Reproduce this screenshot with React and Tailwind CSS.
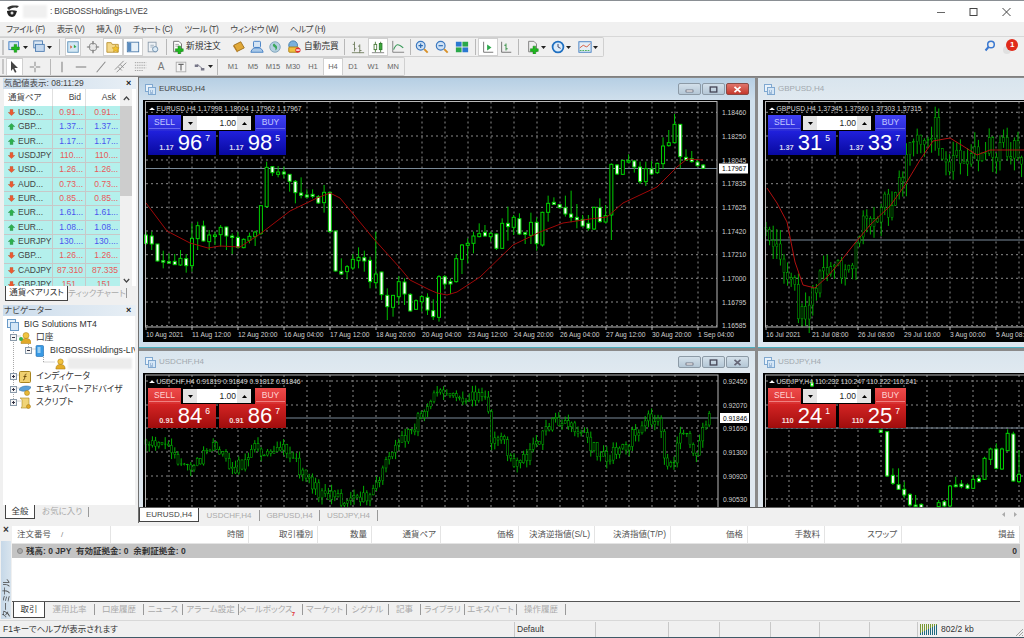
const rnd = (i) => {
  const s = Math.sin(i * 12.9898) * 43758.5453
  return s - Math.floor(s)
}

const interp = (path, x) => {
  for (let i = 1; i < path.length; i++) {
    if (x <= path[i][0]) {
      const [x0, y0] = path[i - 1]
      const [x1, y1] = path[i]
      return y0 + ((y1 - y0) * (x - x0)) / (x1 - x0)
    }
  }
  return path[path.length - 1][1]
}

// bars made up from a rough price path, for the dense charts
const makeBars = (path, x0, x1, step, amp, seed) => {
  const out = []
  let prev = interp(path, x0)
  let n = seed
  for (let x = x0; x < x1; x += step) {
    const c = interp(path, x) + (rnd(n++) - 0.5) * amp
    const hi = Math.min(prev, c) - rnd(n++) * amp * 0.5
    const lo = Math.max(prev, c) + rnd(n++) * amp * 0.5
    out.push({ x, o: prev, c, hi, lo })
    prev = c
  }
  return out
}

// [bodyTop, bodyBottom, wickTop, wickBottom, white?] read off the picture at 3x
const EUR_CANDLES = [
  [405,430,395,435,1],[408,432,395,450,1],[432,483,432,485,1],[482,485,452,505,1],[485,488,460,490,1],[484,494,462,495,1],[475,495,450,498,0],[476,497,462,518,1],
  [415,497,370,515,0],[377,416,365,450,0],[378,423,362,425,1],[405,425,390,450,0],[405,408,395,435,0],[382,404,375,440,0],[381,408,380,450,1],[408,412,400,462,1],
  [412,442,395,445,1],[418,443,415,445,0],[409,421,398,430,0],[396,410,392,438,0],[317,400,315,405,0],[202,320,185,322,0],[200,218,198,228,1],[216,223,198,232,0],
  [216,222,200,235,1],[223,244,222,275,1],[244,278,240,310,1],[279,286,232,295,1],[285,291,268,295,1],[283,289,268,295,1],[290,309,285,312,1],[277,308,255,338,0],
  [277,395,275,397,1],[393,513,392,515,1],[514,522,475,525,1],[500,515,495,538,0],[478,504,462,510,0],[472,482,442,505,0],[473,483,452,515,1],[481,545,470,565,1],
  [522,548,395,565,0],[516,584,515,600,1],[586,620,565,660,1],[586,622,585,650,0],[545,590,528,615,0],[546,582,535,615,1],[583,633,580,635,1],[602,628,598,630,0],
  [590,605,585,635,0],[592,630,580,645,1],[632,650,598,660,1],[530,652,525,665,0],[530,552,525,568,1],[544,552,535,582,1],[476,545,462,548,0],[435,478,432,522,0],
  [430,436,415,490,0],[408,430,395,460,0],[401,410,370,412,0],[397,408,375,410,1],[400,410,395,425,0],[402,445,400,450,1],[370,445,355,447,0],[370,380,320,422,1],
  [352,382,345,405,0],[356,402,340,405,1],[398,403,395,432,1],[367,406,338,432,0],[367,431,352,452,1],[337,435,335,440,0],[310,337,287,365,0],[307,313,292,315,1],
  [314,323,312,325,1],[323,342,287,350,1],[342,352,272,367,1],[352,360,312,385,1],[358,378,345,380,1],[370,385,345,392,1],[322,387,320,390,0],[323,365,295,368,1],
  [347,366,315,370,0],[193,345,190,420,0],[195,222,192,225,1],[181,223,180,225,0],[182,186,163,190,0],[183,201,180,218,1],[201,245,185,252,1],[206,245,185,258,0],
  [207,222,183,225,1],[190,218,188,222,0],[138,191,112,207,0],[128,137,90,140,0],[73,128,42,130,0],[73,170,72,205,1],[172,180,148,182,1],[176,185,153,188,1],
  [186,197,180,200,1],[195,205,192,207,1],
]

const EUR_MA = [
  [146,203],[167,231],[190,243],[208,248],[220,246],[240,247],[260,234],[290,211],[317,198],[330,193],[340,198],[373,238],[400,268],[410,280],[430,290],
  [437,293],[447,295],[457,292],[480,277],[513,245],[540,232],[563,223],[590,219],[607,217],[623,203],[657,187],[677,167],[687,159],[703,160],
]

// zx (2.64x), body top, bottom, wick top, bottom, white?
const JPY_CANDLES = [
  [1190,240,247,240,247,1],[1207,245,378,245,380,1],[1222,376,400,355,405,1],[1237,404,418,355,420,1],[1252,418,435,395,445,1],[1267,433,465,430,470,1],[1282,465,470,435,475,1],
  [1297,463,475,460,480,1],[1343,458,470,450,480,0],[1358,455,468,450,472,1],[1373,408,468,405,470,0],[1388,405,410,380,412,1],[1403,402,410,390,415,1],[1419,405,415,400,418,1],
  [1434,388,415,375,417,0],[1449,385,395,375,398,1],[1464,325,388,320,390,0],[1480,297,328,293,345,0],[1495,297,355,280,358,1],[1510,297,357,293,360,0],[1525,250,302,238,304,0],
  [1540,252,393,245,395,1],[1555,373,395,300,400,0],
]

const GBP_PATH = [[765,225],[775,250],[785,270],[795,300],[803,310],[815,285],[830,275],[850,275],[862,230],[875,210],[890,205],[900,175],[912,150],[925,130],[937,130],[945,155],[960,165],[975,150],[985,140],[995,160],[1005,145],[1024,150]]
const CHF_PATH = [[146,440],[165,445],[190,470],[215,445],[235,470],[255,450],[285,445],[300,470],[320,495],[350,500],[370,495],[385,465],[400,440],[415,425],[425,410],[438,393],[453,388],[464,400],[487,392],[491,437],[502,437],[510,460],[521,463],[536,443],[551,423],[563,420],[581,430],[597,453],[608,457],[627,443],[646,420],[661,423],[665,463],[672,467],[680,433],[691,440],[695,457],[703,433],[710,418]]
const GBP_MA = [[767,188],[777,203],[787,222],[795,262],[803,285],[815,288],[828,276],[840,262],[855,243],[870,225],[890,206],[905,185],[920,160],[933,141],[950,138],[963,146],[977,155],[990,150],[1024,150]]

const gridXs = (from, to) => {
  const xs = []
  for (let x = from; x < to; x += 23) xs.push(x)
  return xs
}

const poly = (pts) => pts.map((p) => p.join(',')).join(' ')

const Candle = ({ x, top, bottom, hi, lo, white }) => (
  <g>
    <line x1={x} x2={x} y1={hi} y2={lo} stroke="#00c000" />
    <rect x={x - 1.5} y={top} width={3} height={Math.max(bottom - top, 1.5)} fill={white ? '#ffffff' : '#000000'} stroke="#00d000" strokeWidth="1" />
  </g>
)

const Bars = ({ bars }) => (
  <g>
    {bars.map((b, i) => (
      <g key={i}>
        <line x1={b.x} x2={b.x} y1={b.hi} y2={b.lo} stroke="#00b000" />
        <rect x={b.x - 1} y={Math.min(b.o, b.c)} width={2} height={Math.abs(b.o - b.c)} fill="#000" stroke="#00b800" strokeWidth=".5" />
      </g>
    ))}
  </g>
)

function ChartSvg({ box, frameRight, frameBottom, top, levels, labels, dates, tagY, tag, info, children }) {
  const [bx, by, bw, bh] = box
  const right = frameRight ?? bx + bw + 10
  const bottom = frameBottom ?? by + bh + 10
  return (
    <svg width={bw} height={bh} viewBox={`${bx} ${by} ${bw} ${bh}`} className="block">
      <rect x={bx} y={by} width={bw} height={bh} fill="#000" />
      {gridXs(bx + 3 + 23, right).map((x) => (
        <line key={x} x1={x} x2={x} y1={top} y2={bottom} stroke="#8a8a8a" strokeDasharray="2 3" />
      ))}
      {levels.map((y) => (
        <line key={y} x1={bx + 3} x2={right} y1={y} y2={y} stroke="#8a8a8a" strokeDasharray="2 3" />
      ))}
      <line x1={bx + 3} x2={right} y1={tagY} y2={tagY} stroke="#7a8a99" />
      {children}
      <rect x={bx + 2.5} y={top} width={right - bx - 2.5} height={bottom - top} fill="none" stroke="#b8b8b8" />
      {labels.map(([y, t]) => (
        <text key={t} x={right + 5} y={y + 2.5} fontSize="6.7" fill="#d0d0d0">{t}</text>
      ))}
      {tag && (
        <g>
          <rect x={right + 2} y={tagY - 5} width={29} height={10} fill="#fff" />
          <text x={right + 5} y={tagY + 2.5} fontSize="6.7" fill="#000">{tag}</text>
        </g>
      )}
      {dates.map(([x, t]) => (
        <g key={t}>
          <line x1={x} x2={x} y1={bottom} y2={bottom + 3} stroke="#b8b8b8" />
          <text x={x} y={bottom + 9.5} fontSize="6.7" fill="#d0d0d0">{t}</text>
        </g>
      ))}
      <path d={`M${bx + 6} ${by + 10}l3 -2.5l3 2.5z`} fill="#fff" />
      <text x={bx + 13.5} y={by + 10.5} fontSize="6.8" fill="#d8d8d8">{info}</text>
    </svg>
  )
}

const PANEL_COLORS = {
  blue: {
    top: 'bg-gradient-to-b from-[#4040f4] to-[#2a2ad8] text-[#c4c8ff] border-[#6a6af0]',
    big: 'bg-gradient-to-b from-[#2020dc] to-[#0808a0]',
    small: 'text-[#d8d8f0]',
  },
  red: {
    top: 'bg-gradient-to-b from-[#ee4a4a] to-[#d83030] text-[#ffd4d4] border-[#f08080]',
    big: 'bg-gradient-to-b from-[#d42424] to-[#a00c0c]',
    small: 'text-[#f4dcdc]',
  },
}

function BigPrice({ big, pips, point, c, width }) {
  return (
    <div className={`${c.big} ${width} h-[24px] flex items-baseline justify-end pr-[6px] text-white`}>
      <span className={`${c.small} text-[7.5px] font-bold`}>{big}</span>
      <span className="text-[22px] leading-[23px] ml-[4px]">{pips}</span>
      <span className="text-[8.5px] self-start leading-[14px] ml-[3px]">{point}</span>
    </div>
  )
}

function TradePanel({ color, big, sell, buy }) {
  const c = PANEL_COLORS[color]
  return (
    <div className="absolute left-[5px] top-[15px] w-[138px]">
      <div className="flex h-[16px]">
        <div className={`${c.top} w-[33px] h-[16px] text-[8.5px] text-center leading-[14px]`}>
          SELL
          <div className="mx-[1px] -mt-[1px] border-b border-inherit" />
        </div>
        <div className="ml-[1px] w-[70px] h-[16px] bg-black p-[1px] flex">
          <div className="w-[14px] bg-[#e4e4e4] flex items-center justify-center">
            <svg width="5" height="3" viewBox="0 0 5 3"><path d="M0 0h5L2.5 3z" fill="#000" /></svg>
          </div>
          <div className="flex-1 bg-white text-[8.5px] text-[#222] text-right pr-[1px] leading-[14px]">1.00</div>
          <div className="w-[14px] bg-[#e4e4e4] flex items-center justify-center">
            <svg width="5" height="3" viewBox="0 0 5 3"><path d="M0 3h5L2.5 0z" fill="#000" /></svg>
          </div>
        </div>
        <div className={`${c.top} ml-[3px] w-[31px] h-[16px] text-[8.5px] text-center leading-[14px]`}>
          BUY
          <div className="mx-[1px] -mt-[1px] border-b border-inherit" />
        </div>
      </div>
      <div className="flex gap-[3px]">
        <BigPrice big={big} pips={sell[0]} point={sell[1]} c={c} width="w-[68px]" />
        <BigPrice big={big} pips={buy[0]} point={buy[1]} c={c} width="w-[67px]" />
      </div>
    </div>
  )
}

function WinBtn({ kind, active }) {
  const face = kind === 'close' && active ? 'bg-gradient-to-b from-[#e0736a] to-[#c4372c] border-[#8a4a44]' : 'bg-gradient-to-b from-[#d3e0ea] to-[#b4c7d6] border-[#8c9aa6]'
  const mark = kind === 'close' && !active ? '#667' : kind === 'close' ? '#fff' : '#445'
  return (
    <div className={`${face} border rounded-[2px] w-[23px] h-[12px] flex items-center justify-center`}>
      <svg width="9" height="7" viewBox="0 0 9 7">
        {kind === 'min' && <rect x="1" y="4" width="7" height="2" fill="#fff" stroke={mark} strokeWidth=".6" />}
        {kind === 'max' && <rect x="1.2" y="1" width="6.6" height="5" fill="none" stroke={mark} strokeWidth="1.3" />}
        {kind === 'close' && <path d="M1.5 .8l6 5.4M7.5 .8l-6 5.4" stroke={mark} strokeWidth="1.7" />}
      </svg>
    </div>
  )
}

function ChartWindow({ title, active, controls, className, children }) {
  return (
    <div className={`${className} flex flex-col overflow-hidden`}>
      <div className={`h-[22px] shrink-0 flex items-center pl-[6px] pr-[5px] ${active ? 'bg-gradient-to-b from-[#b6cfe4] to-[#cfdfec]' : 'bg-gradient-to-b from-[#d9e5ee] to-[#e0e9f0]'}`}>
        <svg width="11" height="11" viewBox="0 0 11 11" className="shrink-0">
          <rect x=".5" y=".5" width="7" height="7" fill="#e8f2fb" stroke="#7fa8d0" />
          <rect x="3.5" y="3.5" width="7" height="7" fill="#d4e6f6" stroke="#7fa8d0" />
          <path d="M5 7h1M7 7h1M5 9h3" stroke="#6a93c0" />
        </svg>
        <span className={`ml-[3px] text-[8px] ${active ? 'text-[#444]' : 'text-[#a2a8ae]'}`}>{title}</span>
        {controls && (
          <div className="ml-auto flex gap-[1px] mr-[1px]">
            <WinBtn kind="min" active={active} />
            <WinBtn kind="max" active={active} />
            <WinBtn kind="close" active={active} />
          </div>
        )}
      </div>
      <div className="relative flex-1 overflow-hidden">{children}</div>
    </div>
  )
}

const Caret = () => (
  <svg width="5" height="3" viewBox="0 0 5 3" className="shrink-0 ml-[1px]"><path d="M0 0h5L2.5 3z" fill="#222" /></svg>
)

const Sep = ({ w = 'w-[6px]' }) => (
  <div className={`${w} h-[16px] flex justify-center shrink-0`}><div className="w-px h-full bg-[#b8b8b8]" /></div>
)

const Grip = () => <div className="ml-[2px] mr-[2px] w-[2px] h-[15px] bg-[#c6c6c6] shrink-0" />

const Tool = ({ w = 'w-[20px]', on, children }) => (
  <div className={`${w} h-[18px] shrink-0 flex items-center justify-center ${on ? 'bg-white border border-[#d0d0d0]' : ''}`}>{children}</div>
)

const Svg = ({ children }) => <svg width="14" height="14" viewBox="0 0 16 16" className="shrink-0">{children}</svg>

const GreenPlus = ({ x = 8, y = 8 }) => (
  <path d={`M${x + 2} ${y - 1}h3v3h3v3h-3v3h-3v-3h-3v-3h3z`} fill="#1fb81f" stroke="#0d7a0d" strokeWidth=".5" />
)

const ChartBars = ({ a = '#6d7a5a' }) => (
  <path d="M4 2v11M2 5h2M4 10h2M10 5v10M8 7h2M10 12h2M1 14.5h14" stroke={a} fill="none" />
)

function ToolbarTop() {
  return (
    <div className="flex items-center h-[20px] w-[604px] border border-[#d0d0d0] border-l-0 rounded-r-[2px]">
      <Grip />
      <Tool w="w-[23px]"><Svg><rect x="1" y="2" width="11" height="9" fill="#d8e8f8" stroke="#3a78c0" /><GreenPlus x={5} y={6} /></Svg><Caret /></Tool>
      <Tool w="w-[26px]"><Svg><rect x="2" y="1" width="10" height="8" fill="#dce8f4" stroke="#4a7ab0" /><rect x="4" y="5" width="10" height="8" fill="#c4d8ee" stroke="#4a7ab0" /></Svg><Caret /></Tool>
      <Sep w="w-[8px]" />
      <Tool on w="w-[16px] mx-[2px]"><Svg><rect x="2" y="2" width="12" height="12" fill="#d4e8f4" stroke="#5a90b8" /><path d="M5 6l2 2-2 2z" fill="#d84a20" /><path d="M9 5l3 3-3 1z" fill="#2aa84a" /></Svg></Tool>
      <Tool><Svg><circle cx="8" cy="8" r="4.5" fill="#e8e8e8" stroke="#888" /><path d="M8 1v4M8 11v4M1 8h4M11 8h4" stroke="#777" strokeWidth="1.4" /></Svg></Tool>
      <Tool on><Svg><path d="M1 3h5l1 2h7v9H1z" fill="#f4d88a" stroke="#b89030" /><path d="M11 6l1.2 2.6 2.8.3-2.1 1.9.6 2.8-2.5-1.4-2.5 1.4.6-2.8-2.1-1.9 2.8-.3z" fill="#f4c430" stroke="#b88a10" strokeWidth=".5" /></Svg></Tool>
      <Tool on><Svg><rect x="1.5" y="2.5" width="13" height="11" fill="#e8f1f8" stroke="#4a78a8" /><rect x="2" y="3" width="4" height="10" fill="#5a8cc0" /></Svg></Tool>
      <Tool><Svg><rect x="2.5" y="2.5" width="9" height="11" fill="#eef2f6" stroke="#8a9aaa" /><circle cx="10.5" cy="10.5" r="3" fill="#dcebf6" stroke="#6a8aa8" /><path d="M5 6h4M5 8h3" stroke="#9aaaba" /></Svg></Tool>
      <Sep w="w-[7px]" />
      <div className="w-[60px] h-[18px] shrink-0 flex items-center pl-[1px]">
        <Svg><path d="M3 1.5h6l3 3v9H3z" fill="#fff" stroke="#666" /><path d="M5 5h4M5 7h5" stroke="#999" /><GreenPlus x={6} y={8} /></Svg>
        <span className="ml-[1px] text-[8.7px] text-[#333] whitespace-nowrap">新規注文</span>
      </div>
      <Tool w="w-[18px]"><Svg><path d="M2 6l8-4 4 7-8 4z" fill="#e0a838" stroke="#9a6a18" /><path d="M2 6l4 7v1.5L1.5 7.5z" fill="#b87c20" /></Svg></Tool>
      <Tool w="w-[18px]"><Svg><rect x="4" y="1.5" width="8" height="7" rx="1" fill="#d4e4f4" stroke="#3a78c0" /><path d="M1 14c1-4 3-5 7-5s6 1 7 5z" fill="#a8c8e8" stroke="#3a78c0" /></Svg></Tool>
      <Tool w="w-[18px]"><Svg><circle cx="8" cy="8" r="6" fill="#b4cfe0" stroke="#7aa0b8" /><path d="M7 4c-2 1-2 3 0 4s2 3 1 4c3-1 3-5 1-6z" fill="#3aa85a" /></Svg></Tool>
      <div className="w-[56px] h-[18px] shrink-0 flex items-center pl-[3px]">
        <Svg><circle cx="7" cy="6" r="5" fill="#7ab0dc" stroke="#3a78a8" /><rect x="2" y="8" width="11" height="6" rx="1" fill="#f0c040" stroke="#a87a10" /><circle cx="12.5" cy="11.5" r="3" fill="#e03030" /><rect x="10.5" y="10.7" width="4" height="1.6" fill="#fff" /></Svg>
        <span className="ml-[3px] text-[8.7px] text-[#333] whitespace-nowrap">自動売買</span>
      </div>
      <Sep w="w-[8px]" />
      <Tool><Svg><ChartBars /></Svg></Tool>
      <Tool on><Svg><path d="M5 2v12M11 2v12" stroke="#4a7a3a" /><rect x="3.5" y="5" width="3" height="6" fill="#fff" stroke="#4a7a3a" /><rect x="9.5" y="4" width="3" height="7" fill="#3aa83a" stroke="#2a7a2a" /><path d="M1 14.5h14" stroke="#777" /></Svg></Tool>
      <Tool><Svg><path d="M2 1v13h13" stroke="#777" fill="none" /><path d="M3 11c3-7 5-7 11-2" stroke="#3a9a5a" fill="none" strokeWidth="1.3" /></Svg></Tool>
      <Sep w="w-[4px]" />
      <Tool><Svg><circle cx="6.5" cy="6.5" r="5" fill="#cfe2f5" stroke="#3a78c0" strokeWidth="1.3" /><path d="M4 6.5h5M6.5 4v5" stroke="#2a68b0" strokeWidth="1.3" /><path d="M10.5 10.5l4 4" stroke="#d89028" strokeWidth="2.2" /></Svg></Tool>
      <Tool><Svg><circle cx="6.5" cy="6.5" r="5" fill="#cfe2f5" stroke="#3a78c0" strokeWidth="1.3" /><path d="M4 6.5h5" stroke="#2a68b0" strokeWidth="1.3" /><path d="M10.5 10.5l4 4" stroke="#d89028" strokeWidth="2.2" /></Svg></Tool>
      <Tool><Svg><rect x="1" y="2" width="6.5" height="5.5" fill="#2a78d0" /><rect x="8.5" y="2" width="6.5" height="5.5" fill="#2aa84a" /><rect x="1" y="8.5" width="6.5" height="5.5" fill="#2aa84a" /><rect x="8.5" y="8.5" width="6.5" height="5.5" fill="#2a78d0" /></Svg></Tool>
      <Sep w="w-[6px]" />
      <Tool on><Svg><path d="M3 2v12h11" stroke="#666" fill="none" /><path d="M7 5l5 3.5L7 12z" fill="#2aa84a" /></Svg></Tool>
      <Tool w="w-[16px]"><Svg><path d="M3 2v12h11" stroke="#666" fill="none" /><path d="M8 4v8M6 6h2M8 10h2" stroke="#2a8a3a" /></Svg></Tool>
      <Sep w="w-[9px]" />
      <Tool w="w-[25px]"><Svg><path d="M3 1.5h6l3 3v9H3z" fill="#eee" stroke="#777" /><GreenPlus x={6} y={8} /></Svg><Caret /></Tool>
      <Tool w="w-[26px]"><Svg><circle cx="8" cy="8" r="6.2" fill="#dcecfa" stroke="#1f6fc0" strokeWidth="2" /><path d="M8 4.5V8l3 1.5" stroke="#335" fill="none" /></Svg><Caret /></Tool>
      <Tool w="w-[27px]"><Svg><rect x="1" y="2" width="14" height="12" fill="#e4eef6" stroke="#3a78c0" /><path d="M2 9l4-3 4 2 4-4" stroke="#d85030" fill="none" /><path d="M2 12h12" stroke="#3aa84a" strokeDasharray="2 1" /></Svg><Caret /></Tool>
    </div>
  )
}

const PERIODS = ['M1', 'M5', 'M15', 'M30', 'H1', 'H4', 'D1', 'W1', 'MN']

function ToolbarBottom() {
  return (
    <div className="flex items-center h-[19px] w-[405px] border border-[#d0d0d0] border-l-0 rounded-r-[2px]">
      <Grip />
      <Tool on w="w-[17px]"><svg width="11" height="13" viewBox="0 0 11 13"><path d="M2 1l7 7H5.500l2 4-1.500.7-2-4L2 11z" fill="#444" /></svg></Tool>
      <Tool w="w-[24px]"><Svg><path d="M8 2v5M8 9v5M2 8h5M9 8h5" stroke="#777" /></Svg></Tool>
      <Sep w="w-[6px]" />
      <Tool w="w-[18px]"><Svg><path d="M8 2v12" stroke="#888" strokeWidth="1.3" /></Svg></Tool>
      <Tool><Svg><path d="M2 8h12" stroke="#888" strokeWidth="1.3" /></Svg></Tool>
      <Tool><Svg><path d="M3 14L13 2" stroke="#888" strokeWidth="1.2" /></Svg></Tool>
      <Tool><Svg><path d="M1 11L11 1M3 14L14 3M5 8l4 4M7 5l4 4" stroke="#888" fill="none" /></Svg></Tool>
      <Tool><Svg><path d="M1 3h13M1 6h13M1 9h13M1 12h9" stroke="#999" strokeDasharray="1.500 1" /></Svg></Tool>
      <Tool><span className="text-[10px] text-[#777]">A</span></Tool>
      <Tool><Svg><rect x="2.500" y="2.500" width="11" height="11" fill="#f4f4f4" stroke="#aaa" /><path d="M5 5h6M8 5v7" stroke="#666" strokeWidth="1.300" /></Svg></Tool>
      <Tool w="w-[24px]"><Svg><path d="M2 5h4v3H2zM9 9h4v3H9z" fill="#778" /><path d="M5 5l6 5" stroke="#778" /></Svg><Caret /></Tool>
      <Sep w="w-[4px]" />
      <div className="flex ml-[4px]">
        {PERIODS.map((p) => (
          <div key={p} className={`w-[20px] h-[18px] flex items-center justify-center text-[7.5px] text-[#666] ${p === 'H4' ? 'bg-white border border-[#d0d0d0]' : ''}`}>{p}</div>
        ))}
      </div>
    </div>
  )
}

const QUOTES = [
  ['USD...', '0.91...', '0.91...', 0],
  ['GBP...', '1.37...', '1.37...', 1],
  ['EUR...', '1.17...', '1.17...', 1],
  ['USDJPY', '110....', '110....', 0],
  ['USD...', '1.26...', '1.26...', 0],
  ['AUD...', '0.73...', '0.73...', 0],
  ['EUR...', '0.85...', '0.85...', 0],
  ['EUR...', '1.61...', '1.61...', 1],
  ['EUR...', '1.08...', '1.08...', 1],
  ['EURJPY', '130....', '130....', 1],
  ['GBP...', '1.26...', '1.26...', 0],
  ['CADJPY', '87.310', '87.335', 0],
  ['GBPJPY', '151...', '151...', 0],
]

const Arrow = ({ up }) => (
  <svg width="7" height="7" viewBox="0 0 8 8" className="shrink-0">
    {up
      ? <path d="M4 .5L7.700 4H5.600v3.500H2.400V4H.3z" fill="#2cb04c" stroke="#1a7a30" strokeWidth=".4" />
      : <path d="M4 7.500L7.700 4H5.600V.5H2.400V4H.3z" fill="#ee5a30" stroke="#b03a18" strokeWidth=".4" />}
  </svg>
)

const PanelHead = ({ children }) => (
  <div className="h-[11px] ml-[3px] mr-[1px] flex items-center bg-gradient-to-r from-[#cbdcec] to-[#e8eff5] text-[8.5px] leading-none text-[#444]">
    <span className="flex-1 whitespace-nowrap pl-[1px]">{children}</span>
    <span className="text-[9px] font-bold text-[#222] w-[10px]">×</span>
  </div>
)

function MarketWatch() {
  return (
    <div className="h-[226px] shrink-0 pt-px flex flex-col">
      <PanelHead>気配値表示: 08:11:29</PanelHead>
      <div className="ml-[4px] mr-[1px] h-[197px] flex overflow-hidden bg-white">
        <div className="w-[116px] overflow-hidden">
          <div className="grid grid-cols-[49px_33px_34px] h-[17px] text-[8.5px] text-[#444] leading-[17px]">
            <div className="pl-[4px] border-r border-[#e0e0e0] whitespace-nowrap">通貨ペア</div>
            <div className="text-right pr-[4px] border-r border-[#e0e0e0]">Bid</div>
            <div className="text-right pr-[4px]">Ask</div>
          </div>
          {QUOTES.map(([sym, bid, ask, up], i) => (
            <div key={i} className="grid grid-cols-[49px_33px_34px] h-[14.33px] bg-[#b4f0ec] border-b border-[#c8c8c8] text-[8.5px] leading-[13px]">
              <div className="flex items-center pl-[4px] text-[#444] border-r border-[#c8c8c8] whitespace-nowrap overflow-hidden">
                <Arrow up={up} />
                <span className="ml-[3px]">{sym}</span>
              </div>
              <div className={`text-right pr-[2px] border-r border-[#c8c8c8] ${up ? 'text-[#4a55ee]' : 'text-[#e85a5a]'}`}>{bid}</div>
              <div className={`text-right pr-[2px] ${up ? 'text-[#4a55ee]' : 'text-[#e85a5a]'}`}>{ask}</div>
            </div>
          ))}
        </div>
        <div className="w-[12px] bg-[#f0f0f0] flex flex-col items-center">
          <svg width="7" height="5" viewBox="0 0 7 5" className="mt-[7px]"><path d="M.8 4l2.700-3 2.700 3" stroke="#444" fill="none" strokeWidth="1.200" /></svg>
          <div className="w-full h-[90px] mt-[5px] bg-[#cdcdcd]" />
          <svg width="7" height="5" viewBox="0 0 7 5" className="mt-auto mb-[3px]"><path d="M.8 1l2.700 3 2.700-3" stroke="#444" fill="none" strokeWidth="1.200" /></svg>
        </div>
      </div>
      <div className="ml-[4px] flex h-[15px] text-[8.5px] leading-[13px]">
        <div className="w-[63px] h-[15px] ml-[1px] bg-white border border-t-0 border-[#444] text-center text-[#333] whitespace-nowrap">通貨ペアリスト</div>
        <div className="w-[59px] text-center text-[#aaa] whitespace-nowrap border-r border-[#999] h-[10px] mt-[2px] leading-[10px]">ティックチャート</div>
      </div>
    </div>
  )
}

const TreeBox = ({ plus }) => (
  <svg width="7" height="7" viewBox="0 0 7 7" className="shrink-0">
    <rect x=".5" y=".5" width="6" height="6" fill="#f4f4f4" stroke="#8a9aaa" />
    <path d={plus ? 'M2 3.500h3M3.500 2v3' : 'M2 3.500h3'} stroke="#334" />
  </svg>
)

const Person = () => (
  <svg width="11" height="12" viewBox="0 0 12 12" className="shrink-0">
    <circle cx="6" cy="3.500" r="3" fill="#f2c440" stroke="#a87a10" strokeWidth=".6" />
    <path d="M1 11.500c0-4 2-5 5-5s5 1 5 5z" fill="#e4ac28" stroke="#a87a10" strokeWidth=".6" />
  </svg>
)

const TreeRow = ({ pl, box, icon, children }) => (
  <div className={`${pl} h-[13px] flex items-center whitespace-nowrap overflow-hidden text-[8.7px] text-[#333]`}>
    {box}
    {icon}
    <span className="ml-[5px]">{children}</span>
  </div>
)

function Navigator() {
  return (
    <div className="flex-1 flex flex-col pt-[2px] min-h-0">
      <PanelHead>ナビゲーター</PanelHead>
      <div className="relative ml-[3px] mr-[2px] flex-1 bg-white pt-[2px]">
        <svg width="60" height="100" viewBox="3 316 60 100" className="absolute left-0 top-0">
          <path d="M13.500 328v72M13.500 336h8M13.500 375h8M13.500 388h8M13.500 401h8M28.500 342v7M28.500 349h8M43.500 355v7M43.500 362h12" stroke="#a8a8a8" strokeDasharray="1 1" fill="none" />
        </svg>
        <div className="relative">
          <TreeRow pl="pl-[4px]" icon={<svg width="12" height="12" viewBox="0 0 12 12" className="shrink-0"><rect x=".5" y=".5" width="8" height="8" fill="#e8f2fb" stroke="#6a9ac8" /><rect x="3.500" y="3.500" width="8" height="8" fill="#d4e6f6" stroke="#6a9ac8" /></svg>}>
            BIG Solutions MT4
          </TreeRow>
          <TreeRow pl="pl-[7px]" box={<TreeBox />} icon={<svg width="12" height="12" viewBox="0 0 12 12" className="shrink-0 ml-[2px]"><circle cx="7" cy="3.500" r="3" fill="#f2c440" stroke="#a87a10" strokeWidth=".5" /><path d="M2 11.500c0-4 2-5 5-5s5 1 5 5z" fill="#e0a828" stroke="#a87a10" strokeWidth=".5" /><circle cx="2" cy="7" r="2" fill="#3ab04a" /></svg>}>
            口座
          </TreeRow>
          <TreeRow pl="pl-[22px]" box={<TreeBox />} icon={<svg width="10" height="12" viewBox="0 0 10 12" className="shrink-0 ml-[3px]"><rect x="1" y=".5" width="7.500" height="11" rx="1" fill="#3a9ae4" stroke="#1a6ab0" strokeWidth=".6" /><rect x="2.500" y="2" width="3" height="6" fill="#9ad0f4" /></svg>}>
            BIGBOSSHoldings-LIVE2
          </TreeRow>
          <div className="pl-[52px] h-[13px] flex items-center">
            <Person />
            <div className="ml-[2px] w-[64px] h-[11px] bg-[#ececec] blur-[1px]" />
          </div>
          <TreeRow pl="pl-[7px]" box={<TreeBox plus />} icon={<svg width="12" height="12" viewBox="0 0 12 12" className="shrink-0 ml-[2px]"><rect x=".5" y=".5" width="11" height="11" rx="1" fill="#f0d070" stroke="#a88420" /><path d="M7.500 3c-1.500 0-1.500 1-1.700 3S5.500 9 4 9M4.500 5.500h3" stroke="#705010" fill="none" /></svg>}>
            インディケータ
          </TreeRow>
          <TreeRow pl="pl-[7px]" box={<TreeBox plus />} icon={<svg width="12" height="12" viewBox="0 0 12 12" className="shrink-0 ml-[2px]"><path d="M0 6c1-4 8-5 12-3-1 3-6 6-12 3z" fill="#5aa0d8" stroke="#2a6aa0" strokeWidth=".5" /><circle cx="8" cy="9" r="2.500" fill="#e8b838" stroke="#a07a10" strokeWidth=".5" /></svg>}>
            エキスパートアドバイザ
          </TreeRow>
          <TreeRow pl="pl-[7px]" box={<TreeBox plus />} icon={<svg width="12" height="12" viewBox="0 0 12 12" className="shrink-0 ml-[2px]"><path d="M1 1h9v8c0 1 1 2-1 2H2c1-1 1-2 1-3V3C3 2 2 2 1 1z" fill="#f0d478" stroke="#a88420" strokeWidth=".6" /><circle cx="9.500" cy="9.500" r="2" fill="#e0a828" stroke="#a07a10" strokeWidth=".5" /></svg>}>
            スクリプト
          </TreeRow>
        </div>
      </div>
      <div className="ml-[3px] flex h-[18px] text-[8.5px] leading-[13px]">
        <div className="ml-[2px] w-[30px] h-[14px] bg-white border border-t-0 border-[#444] text-center text-[#333]">全般</div>
        <div className="ml-[7px] text-[#aaa] whitespace-nowrap">お気に入り</div>
        <div className="ml-[6px] mt-[2px] w-px h-[10px] bg-[#999]" />
      </div>
    </div>
  )
}

const COLS = ['時間', '取引種別', '数量', '通貨ペア', '価格', '決済逆指値(S/L)', '決済指値(T/P)', '価格', '手数料', 'スワップ', '損益']

const BOTTOM_TABS = [
  ['運用比率', 'w-[50px]'],
  ['口座履歴', 'w-[49px]'],
  ['ニュース', 'w-[39px]'],
  ['アラーム設定', 'w-[56px]'],
  ['メールボックス', 'w-[64px] pr-[10px]'],
  ['マーケット', 'w-[44px]'],
  ['シグナル', 'w-[42px]'],
  ['記事', 'w-[32px]'],
  ['ライブラリ', 'w-[44px]'],
  ['エキスパート', 'w-[52px]'],
  ['操作履歴', 'w-[49px]'],
]

function Terminal() {
  return (
    <div className="h-[97px] shrink-0 flex pt-[3px]">
      <div className="w-[12px] shrink-0 flex flex-col items-center">
        <span className="text-[10px] font-bold leading-[7px] text-[#333]">×</span>
        <div className="mt-[8px] w-[10px] flex-1 mb-[1px] bg-gradient-to-r from-[#c6d8e8] to-[#d8e4ee] flex items-end justify-center pb-px">
          <span className="[writing-mode:vertical-rl] [text-orientation:sideways] rotate-180 text-[8.5px] leading-[10px] text-[#444] whitespace-nowrap">ターミナル</span>
        </div>
      </div>
      <div className="flex-1 min-w-0 flex flex-col">
        <div className="grid grid-cols-[99px_138px_69px_54px_69px_78px_76px_76px_77px_77px_77px_118px] w-[1008px] h-[18px] bg-white text-[8.5px] leading-[17px] text-[#555] border-b border-[#e4e4e4]">
          <div className="pl-[5px] border-r border-[#e4e4e4] flex whitespace-nowrap">注文番号<span className="ml-[10px] text-[8px] text-[#888]">/</span></div>
          {COLS.map((c, i) => (
            <div key={i} className="text-right pr-[4px] border-r border-[#e4e4e4] whitespace-nowrap">{c}</div>
          ))}
        </div>
        <div className="w-[1008px] h-[14px] bg-[#c4c4c4] flex items-center text-[8.5px] font-bold text-[#333] whitespace-nowrap">
          <svg width="6" height="6" viewBox="0 0 6 6" className="ml-[5px]"><circle cx="3" cy="3" r="2.500" fill="#aaa" stroke="#888" /></svg>
          <span className="ml-[3px]">残高: 0 JPY&nbsp; 有効証拠金: 0&nbsp; 余剰証拠金: 0</span>
          <span className="ml-auto mr-[3px]">0</span>
        </div>
        <div className="w-[1008px] h-[44px] bg-white border-b border-[#555]" />
        <div className="flex h-[18px] text-[8.5px] leading-[14px] text-[#aaa]">
          <div className="ml-px w-[32px] h-[16px] bg-white border border-t-0 border-[#444] text-center text-[#333]">取引</div>
          {BOTTOM_TABS.map(([t, w]) => (
            <div key={t} className={`${w} h-[11px] mt-[2px] relative border-r border-[#999] text-center whitespace-nowrap leading-[11px]`}>
              {t}
              {t === 'メールボックス' && <span className="absolute right-[7px] top-[5px] text-[6px] font-bold text-[#e03030]">7</span>}
            </div>
          ))}
        </div>
      </div>
    </div>
  )
}

const STATUS_CELLS = ['w-[81px] pl-[2px]', 'w-[73px]', 'w-[51px]', 'w-[51px]', 'w-[49px]', 'w-[50px]', 'w-[48px]']

function StatusBar() {
  return (
    <div className="h-[18px] shrink-0 flex items-center border-t border-[#d8d8d8] border-b border-b-[#3f5a68] text-[8.5px] text-[#333] relative">
      <div className="w-[514px] pl-[3px] whitespace-nowrap">F1キーでヘルプが表示されます</div>
      {STATUS_CELLS.map((w, i) => (
        <div key={i} className={`${w} h-[15px] border-l border-[#c8c8c8] leading-[15px]`}>{i === 0 ? 'Default' : ''}</div>
      ))}
      <div className="h-[15px] border-l border-[#c8c8c8] flex items-center pl-[2px]">
        <svg width="18" height="11" viewBox="0 0 18 11">
          {Array.from({ length: 9 }).map((_, i) => (
            <g key={i}>
              <rect x={i * 2} y="0" width="1" height="11" fill="#7a9a30" />
              <rect x={i * 2} y={9 - i} width="1" height={2 + i} fill="#1f6a80" />
            </g>
          ))}
        </svg>
        <span className="ml-[3px] whitespace-nowrap">802/2 kb</span>
      </div>
      <svg width="10" height="10" viewBox="0 0 10 10" className="absolute right-0 bottom-0">
        <path d="M9 2L2 9M9 5L5 9M9 8L8 9" stroke="#a0a0a0" />
      </svg>
    </div>
  )
}

const EUR_LEVELS = [112.3, 136, 160, 183.7, 207.3, 231, 254.7, 278.3, 302, 325.7]
const CHF_LEVELS = [381, 405, 428, 452, 476, 499]

function EurChart() {
  const labels = [[112.3, '1.18460'], [136, '1.18250'], [160, '1.18045'], [183.7, '1.17835'], [207.3, '1.17625'], [231, '1.17420'], [254.7, '1.17210'], [278.3, '1.17000'], [302, '1.16795'], [325.7, '1.16585']]
  const dates = [[146, '10 Aug 2021'], [192, '11 Aug 12:00'], [238, '12 Aug 20:00'], [284, '16 Aug 04:00'], [330, '17 Aug 12:00'], [376, '18 Aug 20:00'], [422, '20 Aug 04:00'], [468, '23 Aug 12:00'], [514, '24 Aug 20:00'], [560, '26 Aug 04:00'], [606, '27 Aug 12:00'], [652, '30 Aug 20:00'], [698, '1 Sep 04:00']]
  return (
    <ChartSvg box={[143, 100, 607, 243]} frameRight={717} frameBottom={327} top={101.5} levels={EUR_LEVELS} labels={labels} dates={dates} tagY={168.5} tag="1.17967" info="EURUSD,H4  1.17998 1.18004 1.17962 1.17967">
      {EUR_CANDLES.map(([t, b, h, l, w], i) => (
        <Candle key={i} x={146 + i * 5.745} top={100 + t / 3} bottom={100 + b / 3} hi={100 + h / 3} lo={100 + l / 3} white={w} />
      ))}
      <polyline points={poly(EUR_MA)} fill="none" stroke="#a00808" />
    </ChartSvg>
  )
}

function GbpChart() {
  const dates = [[766, '16 Jul 2021'], [812, '21 Jul 08:00'], [858, '26 Jul 08:00'], [904, '29 Jul 16:00'], [950, '3 Aug 00:00'], [996, '5 Aug 08:00']]
  return (
    <ChartSvg box={[763, 100, 261, 243]} frameBottom={327} top={101.5} levels={EUR_LEVELS} labels={[]} dates={dates} tagY={240} info="GBPUSD,H4  1.37345 1.37360 1.37303 1.37315">
      <Bars bars={makeBars(GBP_PATH, 766, 1024, 3.6, 30, 3)} />
      <polyline points={poly(GBP_MA)} fill="none" stroke="#b01010" />
    </ChartSvg>
  )
}

function ChfChart() {
  const labels = [[381, '0.92450'], [405, '0.92070'], [428, '0.91690'], [452, '0.91300'], [476, '0.90920'], [499, '0.90530']]
  return (
    <ChartSvg box={[143, 373, 607, 135]} frameRight={718} top={375} levels={CHF_LEVELS} labels={labels} dates={[]} tagY={418} tag="0.91846" info="USDCHF,H4  0.91819 0.91849 0.91812 0.91846">
      <Bars bars={makeBars(CHF_PATH, 146, 710, 3.2, 14, 11)} />
    </ChartSvg>
  )
}

function JpyChart() {
  return (
    <ChartSvg box={[763, 373, 261, 135]} top={375} levels={CHF_LEVELS} labels={[]} dates={[]} tagY={428} info="USDJPY,H4  110.232 110.247 110.222 110.241">
      <Candle x={812} top={383} bottom={386} hi={380} lo={387} white={1} />
      {JPY_CANDLES.map(([x, t, b, h, l, w], i) => (
        <Candle key={i} x={430 + x / 2.64} top={350 + t / 3} bottom={350 + b / 3} hi={350 + h / 3} lo={350 + l / 3} white={w} />
      ))}
    </ChartSvg>
  )
}

const MENUS = ['ファイル (F)', '表示 (V)', '挿入 (I)', 'チャート (C)', 'ツール (T)', 'ウィンドウ (W)', 'ヘルプ (H)']

const MDI_TABS = [
  ['USDCHF,H4', 'w-[61px]'],
  ['GBPUSD,H4', 'w-[60px]'],
  ['USDJPY,H4', 'w-[58px]'],
]

export default function App() {
  return (
    <div className="w-[1024px] h-[638px] overflow-hidden flex flex-col bg-[#f0f0f0] [font-feature-settings:'palt'] font-['Liberation_Sans','Noto_Sans_CJK_JP',sans-serif]">
      {/* title bar */}
      <div className="h-[22px] shrink-0 bg-white border-t border-[#8a8f94] flex items-center relative">
        <svg width="14" height="13" viewBox="0 0 14 13" className="ml-[6px] shrink-0">
          <path d="M1 3C4 0 9 .5 13 1l-2 2C8 2 5 3 3 5z" fill="#333" />
          <path d="M1 6c3-1 7-1 10 0-1 3-2 6-5 6C3 12 1 9 1 6z" fill="#222" />
          <circle cx="6" cy="8" r="1.500" fill="#ddd" />
        </svg>
        <div className="ml-[3px] w-[24px] h-[13px] bg-[#f0f0f0] blur-[1px]" />
        <span className="ml-[3px] text-[8.5px] tracking-[-0.2px] text-[#444] whitespace-nowrap">: BIGBOSSHoldings-LIVE2</span>
        <div className="ml-auto flex items-center text-[#444]">
          <svg width="33" height="14" viewBox="0 0 33 14"><path d="M13 7.500h8" stroke="#666" /></svg>
          <svg width="33" height="14" viewBox="0 0 33 14"><rect x="13" y="3.500" width="7" height="7" fill="none" stroke="#444" /></svg>
          <svg width="33" height="14" viewBox="0 0 33 14" className="mr-[1px]"><path d="M12.500 3l8 8M20.500 3l-8 8" stroke="#444" /></svg>
        </div>
      </div>

      {/* menu */}
      <div className="h-[15px] shrink-0 flex items-center pl-[6px] gap-[12px] text-[8.5px] tracking-[-0.5px] text-[#444] border-b border-[#d8d8d8]">
        {MENUS.map((m) => <span key={m} className="whitespace-nowrap">{m}</span>)}
      </div>

      {/* toolbars */}
      <div className="h-[39px] shrink-0 relative">
        <ToolbarTop />
        <ToolbarBottom />
        <svg width="12" height="12" viewBox="0 0 12 12" className="absolute left-[984px] top-[3px]">
          <circle cx="7" cy="4.500" r="3.300" fill="none" stroke="#3a78d0" strokeWidth="1.500" />
          <path d="M4.500 7L1.500 10.500" stroke="#3a78d0" strokeWidth="2" />
        </svg>
        <svg width="20" height="18" viewBox="0 0 20 18" className="absolute left-[1001px] top-[1px]">
          <circle cx="6" cy="12" r="4" fill="#e0e0e0" />
          <circle cx="11" cy="7" r="6" fill="#e02a1a" />
        </svg>
        <span className="absolute left-[1010px] top-[3px] text-[8px] font-bold text-white leading-[10px]">1</span>
      </div>

      {/* main */}
      <div className="h-[447px] shrink-0 flex border-t border-[#808080]">
        <div className="w-[137px] shrink-0 flex flex-col">
          <MarketWatch />
          <Navigator />
        </div>
        <div className="w-[2px] bg-[#f0f0f0] border-r border-[#707070] shrink-0" />
        <div className="flex-1 min-w-0 flex flex-col">
          <div className="h-[431px] shrink-0 overflow-hidden bg-[#8a8a8a] border-b border-[#606060] pt-px grid grid-cols-[616px_267px] grid-rows-[270px_157px] gap-[3px]">
            <ChartWindow title="EURUSD,H4" active controls className="bg-[#cfdfec] pl-[4px] pr-[5px] pb-[5px] [&>div:first-child]:-ml-[4px] [&>div:first-child]:-mr-[5px] border-b border-[#4ab0c0]">
              <EurChart />
              <TradePanel color="blue" big="1.17" sell={['96', '7']} buy={['98', '5']} />
            </ChartWindow>
            <ChartWindow title="GBPUSD,H4" className="bg-[#dfe8f0] pl-[5px] pb-[5px] [&>div:first-child]:-ml-[5px] border-b border-[#4ab0c0]">
              <GbpChart />
              <TradePanel color="blue" big="1.37" sell={['31', '5']} buy={['33', '7']} />
            </ChartWindow>
            <ChartWindow title="USDCHF,H4" controls className="bg-[#dfe8f0] pl-[4px] pr-[5px] [&>div:first-child]:-ml-[4px] [&>div:first-child]:-mr-[5px]">
              <ChfChart />
              <TradePanel color="red" big="0.91" sell={['84', '6']} buy={['86', '7']} />
            </ChartWindow>
            <ChartWindow title="USDJPY,H4" className="bg-[#dfe8f0] pl-[5px] [&>div:first-child]:-ml-[5px]">
              <JpyChart />
              <TradePanel color="red" big="110" sell={['24', '1']} buy={['25', '7']} />
            </ChartWindow>
          </div>
          <div className="h-[15px] flex text-[8px] leading-[11px] text-[#aaa]">
            <div className="w-[60px] h-[14px] bg-white border border-t-0 border-[#444] text-center text-[#444] leading-[13px]">EURUSD,H4</div>
            {MDI_TABS.map(([t, w]) => (
              <div key={t} className={`${w} h-[11px] mt-[2px] border-r border-[#999] text-center`}>{t}</div>
            ))}
            <div className="ml-auto mr-[7px] flex gap-[9px] items-center h-[12px]">
              <svg width="3" height="5" viewBox="0 0 3 5"><path d="M3 0v5L0 2.500z" fill="#aaa" /></svg>
              <svg width="3" height="5" viewBox="0 0 3 5"><path d="M0 0v5l3-2.500z" fill="#aaa" /></svg>
            </div>
          </div>
        </div>
      </div>

      <Terminal />
      <StatusBar />
    </div>
  )
}
